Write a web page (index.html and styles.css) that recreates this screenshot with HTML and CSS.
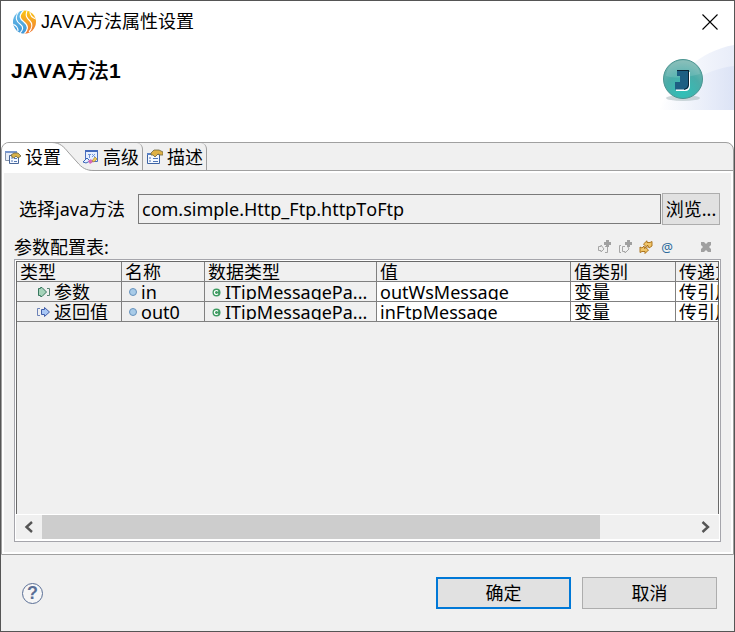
FILE: index.html
```html
<!DOCTYPE html>
<html lang="zh-CN">
<head>
    <meta charset="UTF-8">
    <meta name="viewport" content="width=device-width, initial-scale=1.0">
    <title>JAVA方法属性设置</title>
    <link rel="stylesheet" href="styles.css">
</head>
<body>
    <div class="dialog">
        <header class="header">
            <div class="titlebar">
                <svg class="logo" width="24" height="24" viewBox="0 0 24 24">
                    <defs>
                        <linearGradient id="blue" x1="0" y1="0" x2="0" y2="1">
                            <stop offset="0" stop-color="#6cc0ec"/><stop offset="1" stop-color="#3f97d6"/>
                        </linearGradient>
                        <linearGradient id="orange" x1="0" y1="0" x2="0" y2="1">
                            <stop offset="0" stop-color="#fbc814"/><stop offset="1" stop-color="#ef7638"/>
                        </linearGradient>
                        <clipPath id="disc"><circle cx="12.500" cy="12" r="11.500"/></clipPath>
                    </defs>
                    <g clip-path="url(#disc)">
                        <path d="M12 0C6 6 8 9 12 12C17 16 16 20 12 24H0V0Z" fill="url(#blue)"/>
                        <path d="M12 0C6 6 8 9 12 12C17 16 16 20 12 24H24V0Z" fill="url(#orange)"/>
                        <path d="M12 0C6 6 8 9 12 12C17 16 16 20 12 24" fill="none" stroke="#fff" stroke-width="1.200"/>
                        <path d="M7 1C2 8 5 12 8 14C12 17 11 20 8 23M0 14C4 15 6 17 6 21" fill="none" stroke="#fff" stroke-width="1.100"/>
                        <path d="M15 1C13 6 15 8 18 11C21 14 20 19 17 22M18 2C18 6 21 8 24 9" fill="none" stroke="#fff" stroke-width="1.100"/>
                    </g>
                </svg>
                <h1 class="title">JAVA方法属性设置</h1>
                <button class="close" type="button" aria-label="关闭">
                    <svg width="16" height="16" viewBox="0 0 16 16"><path d="M.5 .5L15.5 15.5M15.5 .5L.5 15.5" stroke="#000" stroke-width="1.1"/></svg>
                </button>
            </div>
            <h2 class="heading">JAVA<span>方法</span>1</h2>
            <svg class="banner" width="75" height="66" viewBox="0 0 75 66">
                <defs>
                    <linearGradient id="wave" x1="0" y1="0" x2="1" y2="0">
                        <stop offset="0" stop-color="#fff"/><stop offset="1" stop-color="#d9e1f5"/>
                    </linearGradient>
                    <radialGradient id="ball" cx=".5" cy=".85" r=".8">
                        <stop offset="0" stop-color="#2fc0b8"/><stop offset=".6" stop-color="#4aaca8"/><stop offset="1" stop-color="#77b5b0"/>
                    </radialGradient>
                </defs>
                <path d="M0 65C14 32 40 6 75 0V65Z" fill="url(#wave)" opacity=".6"/>
                <path d="M0 65C20 44 44 24 75 21V65Z" fill="url(#wave)" opacity=".8"/>
                <ellipse cx="24" cy="53" rx="17" ry="3" fill="#9fb4b5" opacity=".5"/>
                <circle cx="24" cy="34" r="19.5" fill="url(#ball)" stroke="#4a9491"/>
                <path d="M7 31C9 11 38 10 41 29C31 32 18 34 7 31Z" fill="#fff" opacity=".12"/>
                <path d="M19 27H31V41Q31 46 26 46H17V44H24V31H19Z" fill="#fff"/>
                <path d="M18 25H30V40Q30 44.500 25 44.500H16V37H21V31H18Z" fill="#1d5f83"/>
                <path d="M18 25.5H30M29.500 25V40Q29 44 25 44.500" stroke="#0b2536" fill="none"/>
            </svg>
        </header>

        <main class="folder">
            <div class="tabs" role="tablist">
                <button class="tab tab-active" type="button" role="tab" aria-selected="true">
                    <svg class="tab-shape" width="92" height="28" viewBox="0 0 92 28">
                        <path d="M0 0H50C58 0 62 4 66 9L75 19C80 25 84 27.500 91 27.500V28H0Z" fill="#fff"/>
                        <path d="M50 -.5C58 -.5 62 4 66 9L75 19C80 25 84 27.500 92 27.500" fill="none" stroke="#a0a0a0"/>
                    </svg>
                    <svg class="tab-icon" width="16" height="16" viewBox="0 0 16 16">
                        <path d="M.5 2.500H11.500V11.500H.5Z" fill="#e7edf7" stroke="#8592a8"/><path d="M0 2H12V4H0Z" fill="#7896cd"/>
                        <path d="M4.500 6.500H13.500V14.500H4.500Z" fill="#f5f9ff" stroke="#496799"/>
                        <path d="M6 9H8M6 12H8M9 9.500H12M9 12.500H12" stroke="#5479b5"/>
                        <path d="M6 6L9 4H13L16 7L13 9L11 7L9 9L7 8Z" fill="#d8b14a" stroke="#6d6440" stroke-width=".8"/>
                    </svg>
                    <span>设置</span>
                </button>
                <button class="tab" type="button" role="tab" aria-selected="false">
                    <svg class="tab-icon" width="16" height="16" viewBox="0 0 16 16">
                        <path d="M2.500 1.500H14.500V12.500H2.500Z" fill="#e6effe" stroke="#4a6fc0"/><path d="M2 1H15V3H2Z" fill="#446abc"/>
                        <path d="M5 5.500H8M6.500 5V9M9 8L12 5M9 5L12 8" stroke="#6f93d8" fill="none"/>
                        <path d="M0 13L4 9L7 12L3 14Z" fill="#e6efff" stroke="#3966b7"/><path d="M5 12L8 10L10 13L7 15Z" fill="#d568bb"/><path d="M9 12L12 8L14 10L11 13Z" fill="#f1cc58" stroke="#9c7528" stroke-width=".6"/>
                    </svg>
                    <span>高级</span>
                </button>
                <button class="tab" type="button" role="tab" aria-selected="false">
                    <svg class="tab-icon" width="16" height="16" viewBox="0 0 16 16">
                        <path d="M.5 4.500H12.500V14.500H.5Z" fill="#f5f9ff" stroke="#3d63a3"/><path d="M0 4H13V6H0Z" fill="#5b82c5"/>
                        <path d="M2 9H4M2 12H4M6 9.500H11M6 12.500H11" stroke="#4d75b7"/>
                        <path d="M4 4L7 1H12L16 3V6H13L11 5L8 8L6 6H4Z" fill="#dfb145" stroke="#6d6440" stroke-width=".8"/>
                    </svg>
                    <span>描述</span>
                </button>
            </div>

            <div class="panel">
                <div class="field">
                    <label for="method">选择java方法</label>
                    <input type="text" id="method" value="com.simple.Http_Ftp.httpToFtp" readonly>
                    <button class="browse" type="button">浏览...</button>
                </div>

                <div class="toolbar">
                    <span class="toolbar-label" id="paramsLabel">参数配置表:</span>
                    <button class="tool" type="button" aria-label="添加参数">
                        <svg width="14" height="14" viewBox="0 0 14 14"><path d="M1.500 6.500H4V5L7 9L4 12V10.500H1.500Z" fill="#eee" stroke="#a6a6a6"/><path d="M8 6.500H10.500V12.500H8" fill="none" stroke="#a6a6a6"/><path d="M9 0H12V2H14V5H12V7H9V5H7V2H9Z" fill="#a0a0a0"/></svg>
                    </button>
                    <button class="tool" type="button" aria-label="添加返回值">
                        <svg width="14" height="14" viewBox="0 0 14 14"><path d="M3 5.500H1.500V12.500H3M4.500 6.500H7M4.500 6.500V11.500H7V13L11 9L10 7" fill="none" stroke="#a6a6a6"/><path d="M9 0H12V2H14V5H12V7H9V5H7V2H9Z" fill="#a0a0a0"/></svg>
                    </button>
                    <button class="tool" type="button" aria-label="刷新">
                        <svg width="14" height="14" viewBox="0 0 14 14"><g fill="#f0c56a" stroke="#a66b12" stroke-width=".9"><path d="M4.500 4L8 .8V2.500H11L13 1.500V6L10 8L9 5.500H8V7.500Z"/><path d="M1 7L3 8L5 6L5.500 8.500H6V7L9.500 10L6 13.500V11.500H3L1 12.500Z"/></g></svg>
                    </button>
                    <button class="tool tool-at" type="button" aria-label="注解">@</button>
                    <button class="tool tool-delete" type="button" aria-label="删除">
                        <svg width="14" height="14" viewBox="0 0 14 14"><path d="M2 2H5L7 4L9 2H12V5L10 7L12 9V12H9L7 10L5 12H2V9L4 7L2 5Z" fill="#a0a0a0"/></svg>
                    </button>
                </div>

                <div class="grid">
                    <div class="grid-view">
                        <table aria-labelledby="paramsLabel">
                            <colgroup>
                                <col class="col-type"><col class="col-name"><col class="col-data"><col class="col-value"><col class="col-kind"><col class="col-pass">
                            </colgroup>
                            <thead>
                                <tr>
                                    <th><div class="cell">类型</div></th>
                                    <th><div class="cell">名称</div></th>
                                    <th><div class="cell">数据类型</div></th>
                                    <th><div class="cell">值</div></th>
                                    <th><div class="cell">值类别</div></th>
                                    <th><div class="cell">传递方式</div></th>
                                </tr>
                            </thead>
                            <tbody>
                                <tr>
                                    <td><div class="cell cell-tree"><svg width="14" height="12" viewBox="0 0 14 12"><path d="M1.500 2.500H3.500V1.500H5L9.500 6L5 10.500H3.500V9.500H1.500Z" fill="#a5d3b9" stroke="#37765e"/><path d="M10 2.500H12.500V9.500H10" fill="none" stroke="#588372"/></svg>参数</div></td>
                                    <td><div class="cell cell-icon"><i class="dot"></i>in</div></td>
                                    <td><div class="cell cell-icon"><svg class="class-icon" width="9" height="9" viewBox="0 0 9 9"><circle cx="4.500" cy="4.500" r="4" fill="#3f9b62"/><path d="M6 3.300A2 2 0 1 0 6 5.700" fill="none" stroke="#fff" stroke-width="1.200"/></svg>ITipMessagePa...</div></td>
                                    <td class="edit"><div class="cell">outWsMessage</div></td>
                                    <td class="edit"><div class="cell">变量</div></td>
                                    <td class="edit"><div class="cell">传引用</div></td>
                                </tr>
                                <tr>
                                    <td><div class="cell cell-tree"><svg width="14" height="12" viewBox="0 0 14 12"><path d="M3 2.500H.5V9.500H3" fill="none" stroke="#6c82b8"/><path d="M4.500 3.500H7.500V1.500L12.500 6L7.500 10.500V8.500H4.500Z" fill="#a9c7f5" stroke="#3f5ca8"/></svg>返回值</div></td>
                                    <td><div class="cell cell-icon"><i class="dot"></i>out0</div></td>
                                    <td><div class="cell cell-icon"><svg class="class-icon" width="9" height="9" viewBox="0 0 9 9"><circle cx="4.500" cy="4.500" r="4" fill="#3f9b62"/><path d="M6 3.300A2 2 0 1 0 6 5.700" fill="none" stroke="#fff" stroke-width="1.200"/></svg>ITipMessagePa...</div></td>
                                    <td class="edit"><div class="cell">inFtpMessage</div></td>
                                    <td class="edit"><div class="cell">变量</div></td>
                                    <td class="edit"><div class="cell">传引用</div></td>
                                </tr>
                            </tbody>
                        </table>
                    </div>
                    <div class="scrollbar">
                        <button class="scroll-arrow" type="button" aria-label="向左"><svg width="10" height="12" viewBox="0 0 10 12"><path d="M8 1L2.500 6L8 11" fill="none" stroke="#555" stroke-width="2.400"/></svg></button>
                        <div class="track"><div class="thumb"></div></div>
                        <button class="scroll-arrow" type="button" aria-label="向右"><svg width="10" height="12" viewBox="0 0 10 12"><path d="M1.500 1L7 6L1.500 11" fill="none" stroke="#555" stroke-width="2.400"/></svg></button>
                    </div>
                </div>
            </div>
        </main>

        <footer class="footer">
            <button class="help" type="button" aria-label="帮助">?</button>
            <button class="btn btn-default" type="button">确定</button>
            <button class="btn" type="button">取消</button>
        </footer>
    </div>
</body>
</html>
```
FILE: styles.css
```css
* {
    box-sizing: border-box;
}

body {
    margin: 0;
    background-color: #f0f0f0;
    color: #000;
    font-family: "Noto Sans", "Noto Sans CJK SC", sans-serif;
    font-size: 18px;
    font-kerning: none;
    line-height: 24px;
}

button,
input {
    font: inherit;
    color: inherit;
    margin: 0;
}

button {
    padding: 0;
    border: none;
    background: none;
}

svg {
    display: block;
    flex: none;
}

.dialog {
    display: flex;
    flex-direction: column;
    min-height: 100vh;
    border: 1px solid #555;
}

/* header */
.header {
    position: relative;
    height: 141px;
    background-color: #fff;
}

.titlebar {
    display: flex;
    align-items: center;
    height: 42px;
    padding: 0 16px 0 11px;
}

.title {
    flex: 1;
    margin: 0 0 0 5px;
    font-family: "Liberation Sans", "Noto Sans CJK SC", sans-serif;
    font-size: 18px;
    font-weight: normal;
}

.heading {
    margin: 16px 0 0 10px;
    font-family: "Liberation Sans", "Noto Sans CJK SC", sans-serif;
    font-size: 21px;
    font-weight: bold;
}

.heading span {
    font-weight: 500;
}

.banner {
    position: absolute;
    right: 0;
    top: 44px;
}

/* tabs */
.folder {
    display: flex;
    flex-direction: column;
    flex: 1;
    border: 1px solid #a0a0a0;
    border-radius: 8px 8px 0 0;
    box-shadow: 0 -8px 0 #fff;
    overflow: hidden;
}

.tabs {
    display: flex;
    height: 28px;
    border-bottom: 1px solid #a0a0a0;
}

.tab {
    position: relative;
    display: flex;
    align-items: center;
    gap: 4px;
    height: 27px;
    padding: 0 3px 0 4px;
    border-right: 1px solid #a0a0a0;
    border-top-right-radius: 6px;
}

.tab-active {
    padding: 0 18px 0 3px;
    border-right: none;
}

.tab-shape {
    position: absolute;
    left: 0;
    top: 0;
}

.tab-icon,
.tab span {
    position: relative;
}

.panel {
    display: flex;
    flex-direction: column;
    flex: 1;
    padding: 20px 10px 10px;
    border: 2px solid #fff;
}

/* method field */
.field {
    display: flex;
    align-items: center;
    height: 32px;
    margin: 0 1px 0 5px;
}

.field label {
    width: 119px;
}

.field input {
    flex: 1;
    min-width: 0;
    height: 30px;
    padding: 0 3px;
    border: 1px solid #7a7a7a;
    border-radius: 0;
    background-color: #f0f0f0;
    outline: none;
}

.browse {
    width: 58px;
    height: 32px;
    margin-left: 1px;
    border: 1px solid #adadad;
    background-color: #e1e1e1;
}

/* parameter table */
.toolbar {
    display: flex;
    align-items: center;
    gap: 7px;
    height: 24px;
    margin: 10px 8px 0 0;
}

.toolbar-label {
    flex: 1;
}

.tool {
    width: 14px;
    height: 16px;
}

.tool-at {
    color: #2b6a9b;
    font-size: 13px;
    line-height: 14px;
}

.tool-delete {
    margin-left: 18px;
}

.grid {
    display: flex;
    flex-direction: column;
    flex: 1;
    padding: 1px;
    border: 1px solid #a5a5ab;
    background-color: #fff;
}

.grid-view {
    flex: 1;
    overflow: hidden;
    border: 1px solid #696969;
    border-bottom: none;
    background-color: #f0f0f0;
}

table {
    width: 738px;
    table-layout: fixed;
    border-collapse: separate;
    border-spacing: 0;
}

.col-type {
    width: 105px;
}

.col-name {
    width: 83px;
}

.col-data {
    width: 172px;
}

.col-value {
    width: 194px;
}

.col-kind {
    width: 105px;
}

.col-pass {
    width: 79px;
}

th,
td {
    height: 20px;
    padding: 0;
    border-right: 1px solid #808080;
    border-bottom: 1px solid #808080;
    font-weight: normal;
    text-align: left;
    vertical-align: top;
}

.edit {
    background-color: #fff;
}

.cell {
    height: 18px;
    padding-left: 3px;
    line-height: 20px;
    white-space: nowrap;
    overflow: hidden;
}

.cell-tree,
.cell-icon {
    display: flex;
    gap: 3px;
}

.cell-tree {
    padding-left: 20px;
}

.cell-tree svg {
    margin-top: 4px;
}

.cell-icon {
    gap: 4px;
    padding-left: 7px;
}

.class-icon {
    margin-top: 6px;
}

.dot {
    flex: none;
    width: 8px;
    height: 8px;
    margin-top: 6px;
    border: 1px solid #6793bd;
    border-radius: 50%;
    background-color: #a8cbe8;
}

.scrollbar {
    display: flex;
    height: 26px;
    border-top: 1px solid #fff;
    border-bottom: 1px solid #fff;
    background-color: #f0f0f0;
}

.scroll-arrow {
    display: flex;
    align-items: center;
    justify-content: center;
    width: 26px;
}

.track {
    flex: 1;
}

.thumb {
    width: calc(100% * 6 / 7);
    height: 100%;
    background-color: #cdcdcd;
}

/* footer */
.footer {
    display: flex;
    align-items: center;
    gap: 11px;
    height: 76px;
    padding: 0 17px 0 21px;
}

.help {
    width: 21px;
    height: 21px;
    margin-right: auto;
    border: 1px solid #5a6f96;
    border-radius: 50%;
    background-color: #f6f6f6;
    color: #5a6f96;
    font-family: "Liberation Sans", sans-serif;
    font-size: 18px;
    font-weight: bold;
    line-height: 19px;
}

.btn {
    width: 135px;
    height: 32px;
    border: 1px solid #adadad;
    background-color: #e1e1e1;
}

.btn-default {
    border: 2px solid #0078d7;
}
```
